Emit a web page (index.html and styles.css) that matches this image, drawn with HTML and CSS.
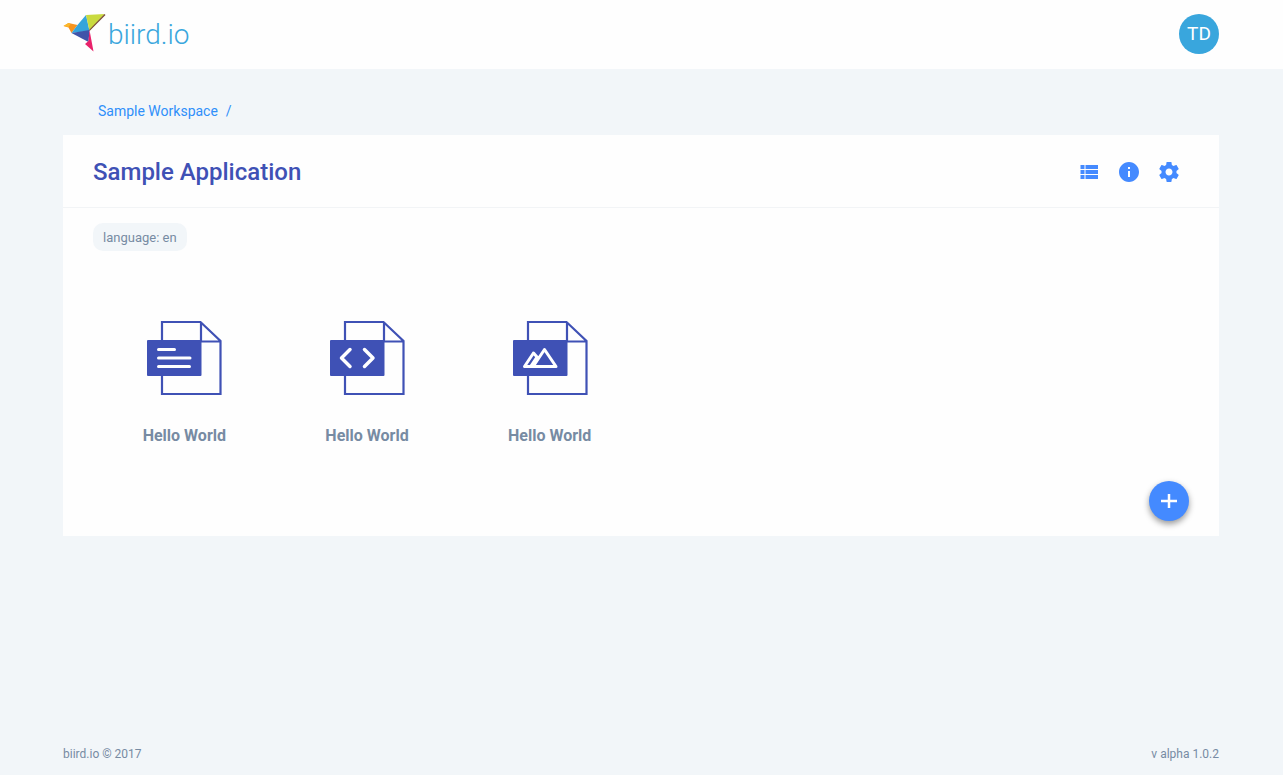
FILE: index.html
```html
<!DOCTYPE html>
<html lang="en">
<head>
<meta charset="utf-8">
<title>Sample Application - biird.io</title>
<meta name="viewport" content="width=device-width, initial-scale=1">
<link rel="stylesheet" href="styles.css">
</head>
<body>
<svg class="defs" aria-hidden="true">
  <symbol id="page" viewBox="0 0 76 76">
    <path d="M16 20V2H54.500L74.500 21V74H16V55M55 2V21.500H74" fill="none" stroke="#3f51b5" stroke-width="2.200"/>
    <rect x="1" y="20" width="54.500" height="36" rx="1" fill="#3f51b5"/>
  </symbol>
</svg>
<header class="topbar">
  <div class="container topbar-row">
    <a class="brand" href="#">
      <svg class="brand-mark" viewBox="0 0 42 39" aria-hidden="true">
        <path d="M0 12L5 9L14 11L8 19L5 13.500Z" fill="#f7931e"/>
        <path d="M0 12L5 9L7 10L5 13Z" fill="#fbb829"/>
        <path d="M22.500 1L26 17L8 19L14 11Z" fill="#35a5dc"/>
        <path d="M22.500 1L41 0L26 17Z" fill="#c9da3f"/>
        <path d="M41 0L26 15.500V17L42 1Z" fill="#7a4a3a"/>
        <path d="M8 19L26 16L25 28Z" fill="#4054a9"/>
        <path d="M26 16L30 37.500L21.500 30L25 27Z" fill="#e9226b"/>
      </svg>
      <span class="brand-name">biird.io</span>
    </a>
    <button class="avatar" type="button" aria-label="Account TD">TD</button>
  </div>
</header>
<main class="container main">
  <nav class="crumbs" aria-label="Breadcrumb"><a href="#">Sample Workspace</a><span>/</span></nav>
  <section class="panel">
    <div class="panel-head">
      <h1>Sample Application</h1>
      <div class="actions">
        <button type="button" aria-label="List view"><svg viewBox="0 0 24 24"><path d="M3.500 9h4V5h-4v4zm0 5h4v-4h-4v4zm5 0h12.500v-4H8.500v4zm0-9v4H21V5H8.500zM3.500 19h4v-4h-4v4zm5 0H21v-4H8.500v4z"/></svg></button>
        <button type="button" aria-label="Information"><svg viewBox="0 0 24 24"><path d="M12 2C6.480 2 2 6.480 2 12s4.480 10 10 10 10-4.480 10-10S17.520 2 12 2zm1 15h-2v-6h2v6zm0-8h-2V7h2v2z"/></svg></button>
        <button type="button" aria-label="Settings"><svg viewBox="0 0 24 24"><path d="M19.430 12.980c.04-.32.07-.64.07-.98s-.03-.66-.07-.98l2.110-1.650c.19-.15.24-.42.12-.64l-2-3.460c-.12-.22-.39-.3-.61-.22l-2.490 1c-.52-.4-1.080-.73-1.690-.98l-.38-2.650C14.460 2.180 14.250 2 14 2h-4c-.25 0-.46.18-.49.42l-.38 2.650c-.61.25-1.170.59-1.690.98l-2.490-1c-.23-.09-.49 0-.61.22l-2 3.460c-.13.22-.07.49.12.64l2.110 1.650c-.04.32-.07.65-.07.98s.03.66.07.98l-2.110 1.650c-.19.15-.24.42-.12.64l2 3.460c.12.22.39.3.61.22l2.490-1c.52.4 1.080.73 1.690.98l.38 2.650c.03.24.24.42.49.42h4c.25 0 .46-.18.49-.42l.38-2.650c.61-.25 1.170-.59 1.690-.98l2.490 1c.23.09.49 0 .61-.22l2-3.460c.12-.22.07-.49-.12-.64l-2.110-1.650zM12 15.500c-1.930 0-3.500-1.570-3.500-3.500s1.570-3.500 3.500-3.500 3.500 1.570 3.500 3.500-1.570 3.500-3.500 3.500z"/></svg></button>
      </div>
    </div>
    <div class="tags"><span class="tag">language: en</span></div>
    <div class="files">
      <a class="file" href="#">
        <svg viewBox="0 0 76 76" aria-hidden="true"><use href="#page"/><path class="glyph thin" d="M12.500 29.500H28.500M12.500 38H44M12.500 46.500H43.500"/></svg>
        <span>Hello World</span>
      </a>
      <a class="file" href="#">
        <svg viewBox="0 0 76 76" aria-hidden="true"><use href="#page"/><path class="glyph" d="M21 29.500L12.500 38L21 46.500M35.500 29.500L44 38L35.500 46.500"/></svg>
        <span>Hello World</span>
      </a>
      <a class="file" href="#">
        <svg viewBox="0 0 76 76" aria-hidden="true"><use href="#page"/><path class="glyph thin" d="M25 37L21.500 33L12.500 46.500H44L32.500 29.500L21.500 46M25 37L19 46"/></svg>
        <span>Hello World</span>
      </a>
    </div>
    <div class="panel-foot">
      <button class="add" type="button" aria-label="Add"><svg viewBox="0 0 24 24"><path d="M20 13.250h-6.750V19h-2.500v-5.750H4v-2.500h6.750V5h2.500v5.750H20z"/></svg></button>
    </div>
  </section>
</main>
<footer class="container footer"><span>biird.io © 2017</span><span>v alpha 1.0.2</span></footer>
</body>
</html>
```
FILE: styles.css
```css
* { box-sizing: border-box; }

body {
  margin: 0;
  min-height: 100vh;
  display: flex;
  flex-direction: column;
  background: #f2f6f9;
  color: #778ba3;
  font-family: Roboto, "Liberation Sans", sans-serif;
  font-size: 14px;
}

a { color: inherit; text-decoration: none; }

button {
  border: 0;
  padding: 0;
  background: none;
  font: inherit;
  cursor: pointer;
}

.defs { display: none; }

.container {
  width: 100%;
  padding: 0 64px 0 63px;
}

.topbar { background: #fefefe; }

.topbar-row {
  height: 69px;
  display: flex;
  align-items: center;
  justify-content: space-between;
  padding-bottom: 2px;
}

.brand { display: flex; align-items: center; gap: 2px; }
.brand-mark { width: 43px; height: 39px; }

.brand-name {
  color: #3ba7dd;
  font-family: Roboto, sans-serif;
  font-size: 28px;
  font-weight: 300;
  line-height: 40px;
  padding-top: 3px;
}

.avatar {
  width: 40px;
  height: 40px;
  border-radius: 50%;
  background: #39a6dd;
  color: #fff;
  font-size: 19px;
}

.main { flex: 1; }

.crumbs {
  display: flex;
  gap: 8px;
  padding: 32px 35px 14px;
  color: #2f8ffa;
  line-height: 20px;
}

.panel { background: #fefefe; }

.panel-head {
  display: flex;
  align-items: center;
  justify-content: space-between;
  height: 73px;
  padding: 2px 30px 0;
  border-bottom: 1px solid #f2f4f6;
}

h1 {
  margin: 0;
  color: #3f51b5;
  font-size: 24px;
  font-weight: 500;
  line-height: 32px;
}

.actions { display: flex; }

.actions button {
  width: 40px;
  height: 40px;
  display: grid;
  place-items: center;
}

.actions svg, .add svg { width: 24px; height: 24px; fill: #448aff; }

.tags { display: flex; padding: 15px 30px 0; }

.tag {
  padding: 1px 10px 0;
  border-radius: 10px;
  background: #f2f6f9;
  font-size: 13px;
  line-height: 27px;
}

.files {
  display: grid;
  grid-template-columns: repeat(6, 1fr);
  padding: 69px 30px 0;
}

.file {
  display: flex;
  flex-direction: column;
  align-items: center;
  gap: 30px;
  font-size: 16px;
  font-weight: 700;
  line-height: 20px;
}

.file svg { width: 76px; height: 76px; }

.glyph {
  fill: none;
  stroke: #fff;
  stroke-width: 3.5;
  stroke-linecap: round;
  stroke-linejoin: round;
}

.thin { stroke-width: 3; }

.panel-foot {
  display: flex;
  justify-content: flex-end;
  padding: 35px 30px 15px;
}

.add {
  width: 40px;
  height: 40px;
  display: grid;
  place-items: center;
  border-radius: 50%;
  background: #448aff;
  box-shadow: 0 3px 6px rgba(0, 0, 0, 0.4);
}

.add svg { fill: #fff; }

.footer {
  display: flex;
  justify-content: space-between;
  padding-bottom: 11px;
  font-size: 12px;
  line-height: 20px;
}
```
